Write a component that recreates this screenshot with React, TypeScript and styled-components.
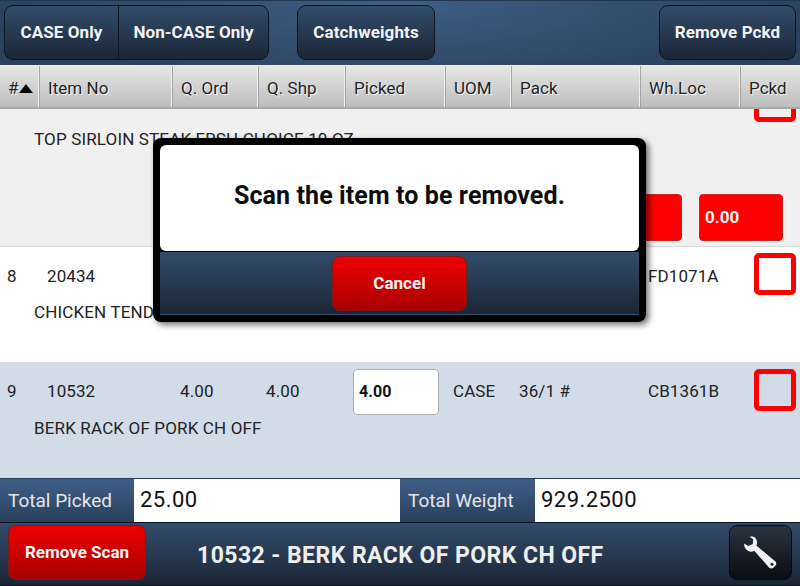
import React from 'react'
import styled, { createGlobalStyle } from 'styled-components'

const GlobalStyle = createGlobalStyle`
  html, body {
    margin: 0;
    padding: 0;
    background: #000;
  }
  * {
    box-sizing: border-box;
  }
`

const COLUMNS = '40px 133px 86px 87px 100px 66px 129px 100px 59px'

const Screen = styled.div`
  position: relative;
  display: flex;
  flex-direction: column;
  width: 800px;
  height: 586px;
  overflow: hidden;
  font-family: Roboto, 'Liberation Sans', sans-serif;
  color: #111;
  background: #f0f0f0;
`

const TopBar = styled.div`
  display: flex;
  align-items: flex-start;
  flex: none;
  height: 65px;
  padding: 4px 4px 0;
  border-top: 1px solid #22354d;
  background: radial-gradient(ellipse 420px 90px at 50% 0, #3f5f88 0%, #35506f 50%, #2a4160 100%);
`

const ButtonGroup = styled.div`
  display: flex;
  height: 55px;
  margin-right: ${p => p.$gap || 0}px;
  border: 1px solid #0d1520;
  border-radius: 9px;
  overflow: hidden;
  background: linear-gradient(#334c6c, #1b2635);
`

const BarButton = styled.div`
  display: flex;
  align-items: center;
  justify-content: center;
  width: ${p => p.$width}px;
  padding-bottom: 2px;
  font-size: 17px;
  font-weight: 700;
  letter-spacing: 0.1px;
  color: #f2f2f2;
  & + & {
    border-left: 1px solid #0d1520;
  }
`

const Spacer = styled.div`
  flex: 1;
`

const TableHead = styled.div`
  display: grid;
  grid-template-columns: ${COLUMNS};
  flex: none;
  height: 44px;
  border-top: 1px solid #eee;
  border-bottom: 2px solid #a8a8a8;
  background: linear-gradient(#e6e6e6, #bdbdbd);
`

const HeadCell = styled.div`
  display: flex;
  align-items: center;
  padding: 3px 0 0 8px;
  font-size: 17px;
  letter-spacing: 0.05px;
  color: #222;
  text-shadow: 1px 1px 1px #fff;
  border-right: 1px solid #a4a4a4;
  box-shadow: inset -1px 0 0 #efefef;
  &:last-child {
    border-right: 0;
    box-shadow: none;
  }
`

const SortArrow = styled.span`
  width: 0;
  height: 0;
  border-left: 7px solid transparent;
  border-right: 7px solid transparent;
  border-bottom: 9px solid #000;
`

const RowList = styled.div`
  display: flex;
  flex-direction: column;
  justify-content: flex-end;
  flex: 1;
  min-height: 0;
  overflow: hidden;
`

const Row = styled.div`
  flex: none;
  height: ${p => p.$height}px;
  background: ${p => p.$bg};
  border-bottom: 1px solid #d8d8d8;
`

const RowCells = styled.div`
  display: grid;
  grid-template-columns: ${COLUMNS};
  align-items: center;
  height: 57px;
  font-size: 17px;
  letter-spacing: 0.1px;
  color: #222;
`

const Cell = styled.div`
  grid-column: ${p => p.$col || 'auto'};
  padding-left: 7px;
  white-space: nowrap;
`

const Description = styled.div`
  height: 16px;
  padding-left: 34px;
  font-size: 17px;
  line-height: 16px;
  letter-spacing: 0.15px;
  color: #222;
  white-space: nowrap;
`

const PickedInput = styled.div`
  display: flex;
  align-items: center;
  align-self: start;
  width: 86px;
  height: 46px;
  margin: 6px 0 0 7px;
  padding-left: 5px;
  border: 1px solid #b0b0b0;
  border-radius: 4px;
  background: #fff;
  font-size: 16px;
  font-weight: 700;
  color: #111;
`

const PackedBox = styled.div`
  grid-column: 9;
  align-self: start;
  width: 42px;
  height: 42px;
  margin: 6px 0 0 13px;
  border: 5px solid #ff0000;
  border-radius: 5px;
  background: ${p => p.$bg};
`

const WeightRow = styled.div`
  display: flex;
  justify-content: flex-end;
  gap: 17px;
  padding: 47px 17px 0 0;
`

const WeightInput = styled.div`
  display: flex;
  align-items: center;
  width: 84px;
  height: 47px;
  padding: 0 0 2px 5px;
  border: 1px solid #cc2222;
  border-radius: 4px;
  background: #ff0000;
  font-size: 17px;
  font-weight: 700;
  color: #f5f5f5;
`

const TotalsBar = styled.div`
  display: flex;
  flex: none;
  height: 45px;
  border-top: 1px solid #2b3f58;
  border-bottom: 1px solid #0d1520;
  background: #fff;
`

const TotalLabel = styled.div`
  display: flex;
  align-items: center;
  width: ${p => p.$width}px;
  padding: 0 0 1px 8px;
  font-size: 19px;
  color: #e6e6e6;
  background: linear-gradient(#3f5f88, #293f5c);
`

const TotalValue = styled.div`
  display: flex;
  align-items: center;
  width: ${p => p.$width}px;
  padding: 0 0 2px 6px;
  font-size: 22px;
  letter-spacing: 0.45px;
  color: #111;
`

const BottomBar = styled.div`
  display: flex;
  align-items: flex-start;
  flex: none;
  height: 63px;
  padding: 2px 8px 0 8px;
  border-bottom: 1px solid #0d1520;
  background: linear-gradient(#334c6c, #1b2635);
`

const RedButton = styled.div`
  display: flex;
  align-items: center;
  justify-content: center;
  flex: none;
  width: ${p => p.$width}px;
  height: 55px;
  padding-bottom: 2px;
  border: 1px solid #7c1a1a;
  border-radius: 8px;
  background: linear-gradient(#ee0000, #a80000);
  font-size: 17px;
  font-weight: 700;
  color: #f5f5f5;
`

const ScanTitle = styled.div`
  flex: 1;
  padding: 17px 0 0 51px;
  font-size: 23px;
  font-weight: 700;
  letter-spacing: 0.44px;
  color: #eee;
  white-space: nowrap;
`

const ToolButton = styled.div`
  display: flex;
  align-items: center;
  justify-content: center;
  width: 63px;
  height: 55px;
  padding-bottom: 1px;
  border: 1px solid #05080c;
  border-radius: 8px;
  background: linear-gradient(#2a3442, #0a0d12);
`

const Dialog = styled.div`
  position: absolute;
  top: 138px;
  left: 153px;
  display: flex;
  flex-direction: column;
  width: 493px;
  height: 184px;
  border: 7px solid #000;
  border-radius: 8px;
  background: #000;
  box-shadow: 3px 3px 6px rgba(0, 0, 0, 0.55);
`

const DialogMessage = styled.div`
  display: flex;
  align-items: center;
  justify-content: center;
  height: 106px;
  padding-bottom: 6px;
  border-radius: 6px;
  background: #fff;
  font-size: 25px;
  font-weight: 700;
  letter-spacing: 0.1px;
  color: #0c0c0c;
`

const DialogFoot = styled.div`
  display: flex;
  justify-content: center;
  height: 63px;
  margin-top: 1px;
  padding-top: 4px;
  border-bottom: 1px solid #35506f;
  background: linear-gradient(#334c6c, #1b2635);
`

const WrenchIcon = () => (
  <svg width="33" height="33" viewBox="0 0 33 33">
    <path
      fill="#f0f0f0"
      d="M5.8.8C9.5-.6 12.6 2 13 5.4c.2 1.6-.1 3-.7 4.2l18.9 15.6c1.4 1.2 1.4 3.2.2 4.6l-1.8 1.8c-1.4 1.4-3.4 1.2-4.6-.2L10.2 14.8c-1.6 1-4 1.2-6 .2C1.4 13.6-.3 10.6.2 7.4L4.4 10l4.4-2 .4-4.6z"
    />
    <circle cx="28" cy="28.3" r="1.5" fill="#1a2029" />
  </svg>
)

const App: React.FC = () => {
  return (
    <>
      <GlobalStyle />
      <Screen>
        <TopBar>
          <ButtonGroup $gap={28}>
            <BarButton $width={113}>CASE Only</BarButton>
            <BarButton $width={150}>Non-CASE Only</BarButton>
          </ButtonGroup>
          <ButtonGroup>
            <BarButton $width={136}>Catchweights</BarButton>
          </ButtonGroup>
          <Spacer />
          <ButtonGroup>
            <BarButton $width={135}>Remove Pckd</BarButton>
          </ButtonGroup>
        </TopBar>
        <TableHead>
          <HeadCell>
            #<SortArrow />
          </HeadCell>
          <HeadCell>Item No</HeadCell>
          <HeadCell>Q. Ord</HeadCell>
          <HeadCell>Q. Shp</HeadCell>
          <HeadCell>Picked</HeadCell>
          <HeadCell>UOM</HeadCell>
          <HeadCell>Pack</HeadCell>
          <HeadCell>Wh.Loc</HeadCell>
          <HeadCell>Pckd</HeadCell>
        </TableHead>
        <RowList>
          <Row $height={173} $bg="#f0f0f0">
            <RowCells>
              <PackedBox $bg="#f0f0f0" />
            </RowCells>
            <Description>TOP SIRLOIN STEAK FRSH CHOICE 10 OZ</Description>
            <WeightRow>
              <WeightInput />
              <WeightInput>0.00</WeightInput>
            </WeightRow>
          </Row>
          <Row $height={115.5} $bg="#fff">
            <RowCells>
              <Cell>8</Cell>
              <Cell>20434</Cell>
              <Cell $col={8}>FD1071A</Cell>
              <PackedBox $bg="#fff" />
            </RowCells>
            <Description>CHICKEN TENDERS</Description>
          </Row>
          <Row $height={115.5} $bg="#d2dce8">
            <RowCells>
              <Cell>9</Cell>
              <Cell>10532</Cell>
              <Cell>4.00</Cell>
              <Cell>4.00</Cell>
              <PickedInput>4.00</PickedInput>
              <Cell>CASE</Cell>
              <Cell>36/1 #</Cell>
              <Cell>CB1361B</Cell>
              <PackedBox $bg="#d2dce8" />
            </RowCells>
            <Description>BERK RACK OF PORK CH OFF</Description>
          </Row>
        </RowList>
        <TotalsBar>
          <TotalLabel $width={134}>Total Picked</TotalLabel>
          <TotalValue $width={266}>25.00</TotalValue>
          <TotalLabel $width={135}>Total Weight</TotalLabel>
          <TotalValue $width={265}>929.2500</TotalValue>
        </TotalsBar>
        <BottomBar>
          <RedButton $width={138}>Remove Scan</RedButton>
          <ScanTitle>10532 - BERK RACK OF PORK CH OFF</ScanTitle>
          <ToolButton>
            <WrenchIcon />
          </ToolButton>
        </BottomBar>
        <Dialog>
          <DialogMessage>Scan the item to be removed.</DialogMessage>
          <DialogFoot>
            <RedButton $width={135}>Cancel</RedButton>
          </DialogFoot>
        </Dialog>
      </Screen>
    </>
  )
}

export default App
